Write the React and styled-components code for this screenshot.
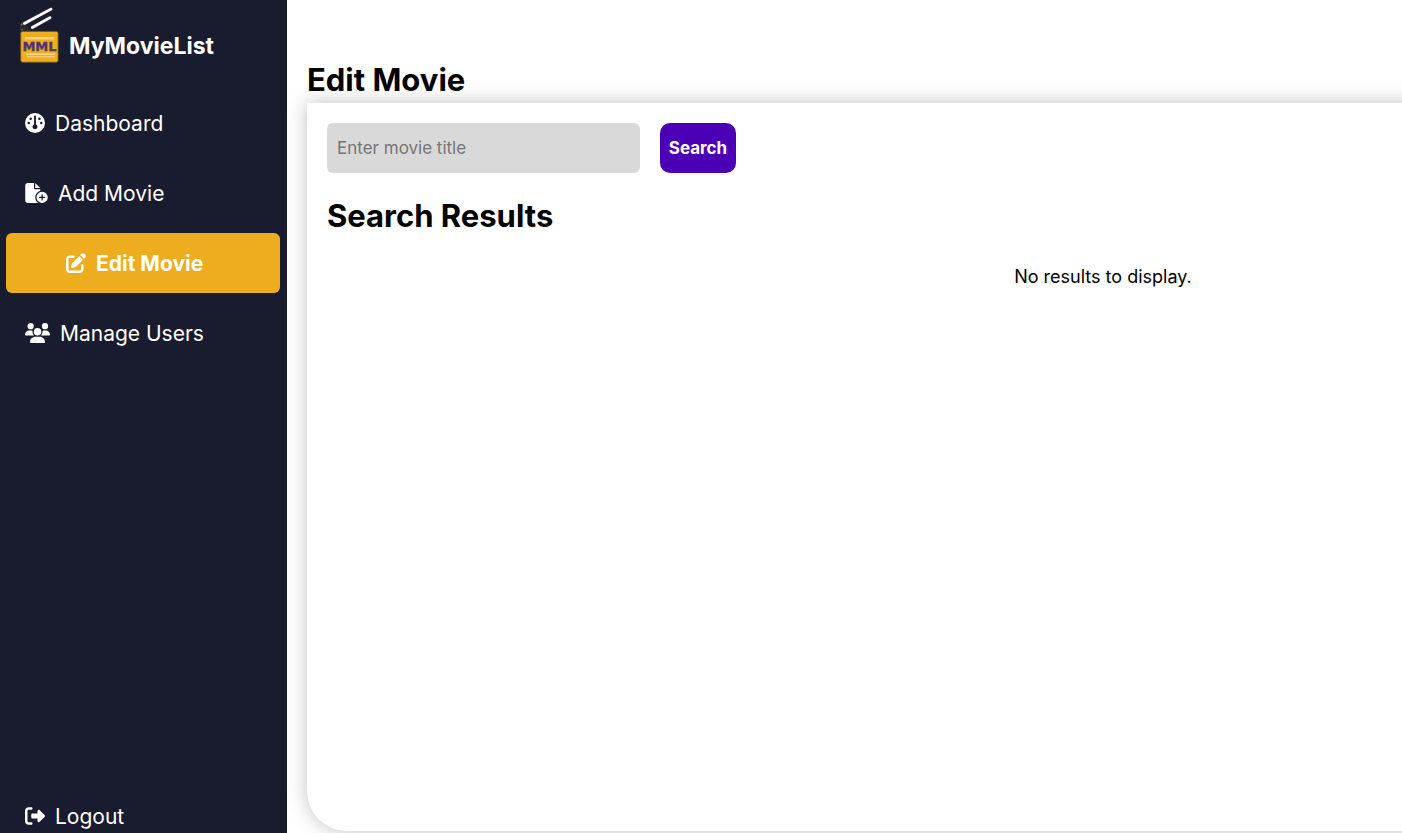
import React from "react";
import styled, { createGlobalStyle } from "styled-components";
import {
  FaGauge,
  FaFileCirclePlus,
  FaPenToSquare,
  FaUsers,
  FaRightFromBracket,
} from "react-icons/fa6";

const GlobalStyle = createGlobalStyle`
  *, *::before, *::after { box-sizing: border-box; }
  body {
    margin: 0;
    background: #fff;
    color: #000;
    font-family: Inter, "Open Sans", sans-serif;
  }
`;

const Page = styled.div`
  display: flex;
  min-height: 100vh;
  overflow: hidden;
`;

const Sidebar = styled.aside`
  flex: 0 0 287px;
  display: flex;
  flex-direction: column;
  background: #191b2e;
  color: #fff;
`;

const Brand = styled.a`
  display: flex;
  align-items: flex-end;
  gap: 10px;
  height: 63px;
  padding-left: 20px;
  color: inherit;
  text-decoration: none;
`;

const BrandName = styled.span`
  font-size: 23px;
  font-weight: 700;
  line-height: 34px;
`;

const Nav = styled.nav`
  display: flex;
  flex-direction: column;
  gap: 10px;
  margin-top: 30px;
  padding: 0 7px 0 6px;
`;

const NavLink = styled.a`
  display: flex;
  align-items: center;
  gap: 10px;
  height: 60px;
  padding-left: ${(p) => (p.$active ? 60 : 19)}px;
  border-radius: 6px;
  background: ${(p) => (p.$active ? "#eead1e" : "transparent")};
  color: #fff;
  font-size: 21px;
  font-weight: ${(p) => (p.$active ? 700 : 400)};
  text-decoration: none;
  white-space: nowrap;

  svg {
    flex: none;
    width: ${(p) => p.$iconWidth || 20}px;
    height: 20px;
  }
`;

const LogoutLink = styled(NavLink)`
  height: 34px;
  margin: auto 7px 0 6px;
`;

const Main = styled.main`
  flex: 1 1 0;
  min-width: 0;
  display: flex;
  flex-direction: column;
  padding: 57px 0 2px 20px;
`;

const Heading = styled.h1`
  margin: 0;
  font-size: 31px;
  font-weight: 700;
  line-height: 46px;
`;

const Card = styled.section`
  flex: 1;
  width: calc(100vw + 190px);
  padding: 20px;
  border-radius: 0 0 40px 40px;
  background: #fff;
  box-shadow: 0 0 20px rgba(0, 0, 0, 0.25);
`;

const SearchForm = styled.form`
  display: flex;
  gap: 20px;
`;

const SearchInput = styled.input`
  width: 313px;
  height: 50px;
  padding: 0 10px;
  border: 0;
  border-radius: 6px;
  background: #d9d9d9;
  color: #000;
  font-family: inherit;
  font-size: 17px;

  &::placeholder {
    color: #757575;
    opacity: 1;
  }
`;

const SearchButton = styled.button`
  width: 76px;
  height: 50px;
  padding: 0;
  border: 0;
  border-radius: 10px;
  background: #4b00b5;
  color: #fff;
  font-family: inherit;
  font-size: 17px;
  font-weight: 700;
`;

const ResultsHeading = styled.h2`
  margin: 20px 0 0;
  font-size: 31px;
  font-weight: 700;
  line-height: 46px;
`;

const EmptyMessage = styled.p`
  margin: 24px 0 0;
  font-size: 18px;
  line-height: 28px;
  text-align: center;
`;

const LogoText = styled.text`
  font-family: "DejaVu Sans", sans-serif;
  font-size: 13px;
  font-weight: 700;
`;

function Logo() {
  return (
    <svg width="39" height="57" viewBox="0 0 39 57" aria-hidden="true">
      <defs>
        <linearGradient id="letters" x1="0" y1="0" x2="0" y2="1">
          <stop offset="0.5" stopColor="#5b2496" />
          <stop offset="0.65" stopColor="#4a4650" />
        </linearGradient>
      </defs>
      <path d="M0 17.5 L3 16 L12 25.5 H0 Z" fill="#2a2a2a" />
      <circle cx="1.7" cy="18.6" r="1" fill="#77777c" />
      <circle cx="2" cy="23.5" r="0.8" fill="#77777c" />
      <path d="M4.3 17.5 L31 3.1" stroke="#5d4380" strokeWidth="3.4" strokeLinecap="round" />
      <path d="M12.3 21.5 L30 11.7" stroke="#5d4380" strokeWidth="3.4" strokeLinecap="round" />
      <path d="M4.3 17.5 L31 3.1" stroke="#fff" strokeWidth="2.6" strokeLinecap="round" />
      <path d="M12.3 21.5 L30 11.7" stroke="#fff" strokeWidth="2.6" strokeLinecap="round" />
      <rect x="0.7" y="25.4" width="37.4" height="30.8" rx="2" fill="#efad20" stroke="#725925" strokeWidth="0.8" />
      <rect x="5" y="31" width="29" height="2.4" fill="#fbd37c" />
      <rect x="6" y="47.6" width="29" height="1.2" fill="#fde2a4" />
      <rect x="7" y="50.2" width="28" height="1.1" fill="#fbd37c" />
      <LogoText x="19.5" y="45" textAnchor="middle" fill="url(#letters)" stroke="#4a4650" strokeWidth="0.4">
        MML
      </LogoText>
    </svg>
  );
}

const links = [
  { label: "Dashboard", Icon: FaGauge },
  { label: "Add Movie", Icon: FaFileCirclePlus, iconWidth: 23 },
  { label: "Edit Movie", Icon: FaPenToSquare, active: true },
  { label: "Manage Users", Icon: FaUsers, iconWidth: 25 },
];

export default function App() {
  return (
    <>
      <GlobalStyle />
      <Page>
        <Sidebar>
          <Brand href="#">
            <Logo />
            <BrandName>MyMovieList</BrandName>
          </Brand>
          <Nav>
            {links.map(({ label, Icon, active, iconWidth }) => (
              <NavLink
                key={label}
                href="#"
                $active={active}
                $iconWidth={iconWidth}
                aria-current={active ? "page" : undefined}
              >
                <Icon aria-hidden="true" />
                {label}
              </NavLink>
            ))}
          </Nav>
          <LogoutLink href="#">
            <FaRightFromBracket aria-hidden="true" />
            Logout
          </LogoutLink>
        </Sidebar>
        <Main>
          <Heading>Edit Movie</Heading>
          <Card>
            <SearchForm onSubmit={(e) => e.preventDefault()}>
              <SearchInput
                type="text"
                aria-label="Movie title"
                placeholder="Enter movie title"
              />
              <SearchButton type="submit">Search</SearchButton>
            </SearchForm>
            <ResultsHeading>Search Results</ResultsHeading>
            <EmptyMessage>No results to display.</EmptyMessage>
          </Card>
        </Main>
      </Page>
    </>
  );
}
